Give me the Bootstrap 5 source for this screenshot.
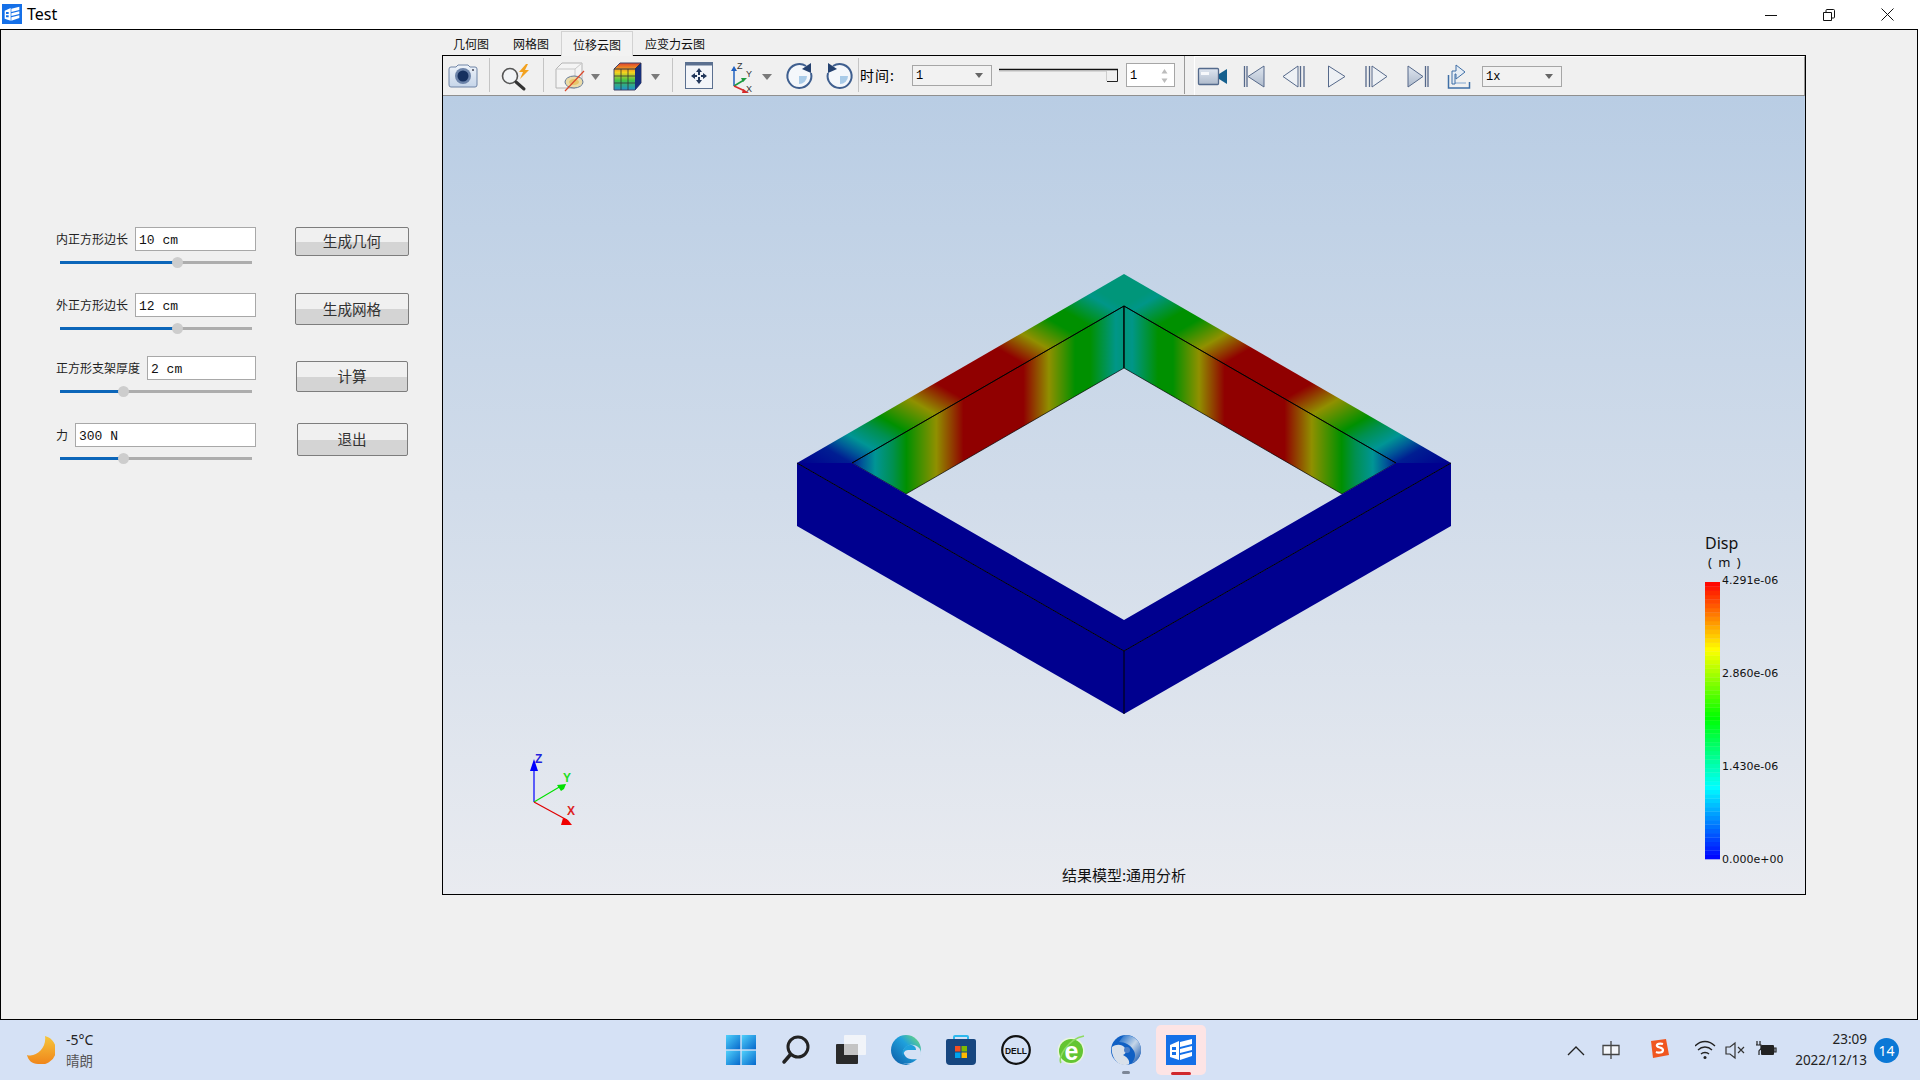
<!DOCTYPE html>
<html lang="zh">
<head>
<meta charset="utf-8">
<title>Test</title>
<link href="https://cdn.jsdelivr.net/npm/bootstrap@5.3.0/dist/css/bootstrap.min.css" rel="stylesheet">
<style>
html,body{margin:0;height:100%;overflow:hidden;background:#fff}
body{font-family:"Noto Sans","Noto Sans CJK SC",sans-serif;color:#000}
svg{display:block;flex-shrink:0}
.app-shell{width:1920px;height:1080px}
.title-bar{height:29px;background:#fff;flex-shrink:0}
.app-ico{margin:4px 5px 0 2px}
.title-text{font-size:16px;line-height:29px}
.win-btn{width:58px;height:29px;display:flex;align-items:center;justify-content:center}
.win-edge{margin-right:4px}
.main-frame{height:991px;width:1918px;border:1px solid #000;background:#f0f0f0;flex-shrink:0}
.side-panel{width:440px;flex-shrink:0;padding:197px 0 0 55px}
.ctrl-row{display:flex}
.row-h1{height:66px}.row-h2{height:63px}.row-h3{height:67px}
.ctrl-col{width:200px;margin-right:39px;flex-shrink:0}
.ctrl-line{display:flex;align-items:center;gap:7px}
.ctrl-label{font-size:12px;color:#222;white-space:nowrap;padding-top:2px}
.ctrl-input.form-control{height:24px;min-height:0;border:1px solid #a8a8a8;border-radius:0;padding:2px 3px 0;font:13px "Liberation Mono",monospace;color:#111;background:#fff;flex:1;min-width:0;box-shadow:none}
.slide-track{position:relative;height:3px;margin:10px 4px 0;background:#adadad}
.slide-fill{height:3px;background:#0c66b9}
.slide-knob{position:absolute;top:-4px;width:11px;height:11px;margin-left:-5px;border-radius:50%;background:#cdcdcd}
.btn-col{width:114px;display:flex;justify-content:center;align-items:flex-start}
.act-btn.btn{padding:0;border:1px solid #7d7d7d;border-radius:2px;font:14.6px "Noto Sans CJK SC",sans-serif;color:#333;background:linear-gradient(#f0f0f0 50%,#d4d4d4 50%);width:100%;line-height:1}
.act-btn.btn:hover{color:#333}
.act-btn.b1{height:29px}.act-btn.b2{height:32px}
.act-btn.btn.b3{height:31px;width:112px;margin-top:5px}
.act-btn.btn.b4{height:33px;width:111px}
.view-col{width:1365px;flex-shrink:0}
.tab-strip{display:flex;height:25px;margin-top:0}
.tab-item{font:12px "Noto Sans CJK SC",sans-serif;padding:5px 12px 0;line-height:18px;color:#111}
.tab-on{background:#f2f2f2;border:1px solid #d2d2d2;border-bottom:0;padding:4px 11px 0;margin-top:1px;position:relative;z-index:1;height:25px}
.view-frame{margin-left:1px;width:1364px;height:840px;border:1px solid #000}
.tool-bar{height:40px;display:flex;border-bottom:1px solid #8f8f8f;background:#f0f0f0}
.tool-sep{border-right:1px solid #c4c4c4;display:flex;align-items:center;height:34px;margin-top:2px}
.tool-e{width:326px;border-right:1px solid #9a9a9a;height:38px;margin:0}
.tool-first{margin-left:1px}
.time-lbl{font:14px "Noto Sans CJK SC",sans-serif;letter-spacing:1px;width:53px;padding-left:1px;flex-shrink:0}
.combo-box{height:21px;border:1px solid #a6a6a6;background:#f2f2f2;display:flex;align-items:center;justify-content:space-between;padding:1px 8px 0 3px;font:12px "Liberation Mono",monospace;flex-shrink:0}
.combo-a{width:80px}
.combo-b{width:80px}
.combo-arrow{width:0;height:0;border-left:4px solid transparent;border-right:4px solid transparent;border-top:5px solid #666}
.spin-box{width:49px;height:24px;border:1px solid #a6a6a6;background:#fff;display:flex;align-items:center;justify-content:space-between;padding:1px 6px 0 3px;font:12px "Liberation Mono",monospace;flex-shrink:0;margin-left:8px}
.slim-slide{margin-left:7px}
.play-panel{margin-left:9px;flex:1;border-top:1px solid #fff;border-left:1px solid #fff;border-right:1px solid #9a9a9a;display:flex;align-items:center;height:39px}
.scene-view{height:798px;background:linear-gradient(#b9cde4,#e9ebf0)}
.task-bar{height:60px;background:#d5e1f5;display:flex;align-items:center;flex-shrink:0;position:relative}
.wx-block{width:726px;display:flex;align-items:center;padding-left:27px;flex-shrink:0}
.wx-txt{margin-left:11px;font-size:14px;line-height:20px;color:#222}
.wx-sub{color:#555;font-family:"Noto Sans CJK SC",sans-serif;font-size:13.5px}
.dock{display:flex;gap:25px;align-items:center}
.dock-item{position:relative;width:30px;height:30px}
.dock-on{width:50px;height:50px;margin:0 -10px;padding:10px;background:#fde4e5;border-radius:5px}
.run-dot{position:absolute;left:11px;top:36px;width:8px;height:3px;border-radius:2px;background:#7c8696}
.run-red{position:absolute;left:15px;top:47px;width:20px;height:3px;border-radius:2px;background:#d0282c}
.tray{position:absolute;left:1567px;top:0;height:60px;display:flex;align-items:center}
.clock-txt{width:78px;text-align:right;font-size:13.5px;line-height:21px;color:#222;white-space:nowrap}
.note-badge{width:25px;height:25px;border-radius:50%;background:#0b78d6;color:#fff;font-size:14px;display:flex;align-items:center;justify-content:center;margin-left:7px}
</style>
</head>
<body>
<svg width="0" height="0" class="position-absolute">
 <defs>
  <symbol id="appicon" viewBox="0 0 30 30">
   <rect width="30" height="30" fill="#1570e8"/>
   <path d="M4 10L13 6V25L4 22Z" fill="#fff"/>
   <path d="M14 7L26 4V9L14 12Z M14 14L26 11V15L14 18Z M14 20L26 17V21L14 25Z" fill="#fff"/>
   <path d="M6 12h4v3H6zM6 17h4v3H6z" fill="#1570e8"/>
  </symbol>
 </defs>
</svg>
<div class="app-shell d-flex flex-column">
 <div class="title-bar d-flex">
  <svg class="app-ico" width="20" height="20"><use href="#appicon"/></svg>
  <span class="title-text">Test</span>
  <div class="ms-auto d-flex win-edge">
   <div class="win-btn"><svg width="12" height="12"><path d="M0 6.500H12" stroke="#111"/></svg></div>
   <div class="win-btn"><svg width="12" height="12"><path d="M.5 3.500h8v8h-8zM3 3V1.500a1 1 0 0 1 1-1h6.500a1 1 0 0 1 1 1V8a1 1 0 0 1-1 1H9" fill="none" stroke="#111"/></svg></div>
   <div class="win-btn"><svg width="13" height="13"><path d="M.5.5l12 12M12.500.5l-12 12" stroke="#111"/></svg></div>
  </div>
 </div>

 <div class="main-frame d-flex">
  <div class="side-panel">
   <div class="ctrl-row row-h1">
    <div class="ctrl-col">
     <div class="ctrl-line"><span class="ctrl-label">内正方形边长</span><input class="form-control ctrl-input" value="10 cm"></div>
     <div class="slide-track"><div class="slide-fill" style="width:61%"></div><div class="slide-knob" style="left:61%"></div></div>
    </div>
    <div class="btn-col"><button class="btn act-btn b1">生成几何</button></div>
   </div>
   <div class="ctrl-row row-h2">
    <div class="ctrl-col">
     <div class="ctrl-line"><span class="ctrl-label">外正方形边长</span><input class="form-control ctrl-input" value="12 cm"></div>
     <div class="slide-track"><div class="slide-fill" style="width:61%"></div><div class="slide-knob" style="left:61%"></div></div>
    </div>
    <div class="btn-col"><button class="btn act-btn b2">生成网格</button></div>
   </div>
   <div class="ctrl-row row-h3">
    <div class="ctrl-col">
     <div class="ctrl-line"><span class="ctrl-label">正方形支架厚度</span><input class="form-control ctrl-input" value="2 cm"></div>
     <div class="slide-track"><div class="slide-fill" style="width:33%"></div><div class="slide-knob" style="left:33%"></div></div>
    </div>
    <div class="btn-col"><button class="btn act-btn b3">计算</button></div>
   </div>
   <div class="ctrl-row">
    <div class="ctrl-col">
     <div class="ctrl-line"><span class="ctrl-label">力</span><input class="form-control ctrl-input" value="300 N"></div>
     <div class="slide-track"><div class="slide-fill" style="width:33%"></div><div class="slide-knob" style="left:33%"></div></div>
    </div>
    <div class="btn-col"><button class="btn act-btn b4">退出</button></div>
   </div>
  </div>

  <div class="view-col">
   <div class="tab-strip">
    <div class="tab-item">几何图</div>
    <div class="tab-item">网格图</div>
    <div class="tab-item tab-on">位移云图</div>
    <div class="tab-item">应变力云图</div>
   </div>
   <div class="view-frame">
    <div class="tool-bar">
     <div class="tool-sep tool-first">
      <svg width="45" height="38" viewBox="0 0 45 38"><defs><linearGradient id="cb" x1="0" y1="0" x2="0" y2="1"><stop offset="0" stop-color="#eef3fa"/><stop offset="1" stop-color="#c6d5e9"/></linearGradient></defs>
       <path d="M5 13a2 2 0 0 1 2-2h5l2-2h10l2 2h5a2 2 0 0 1 2 2v16a2 2 0 0 1-2 2H7a2 2 0 0 1-2-2z" fill="url(#cb)" stroke="#6f84a6"/>
       <circle cx="19" cy="20" r="8" fill="#6c83a9"/><circle cx="19" cy="20" r="5.500" fill="#16305f"/><circle cx="29" cy="14" r="1" fill="#445"/></svg>
     </div>
     <div class="tool-sep">
      <svg width="53" height="38" viewBox="0 0 53 38">
       <circle cx="20" cy="20" r="7.500" fill="#f2f4f6" stroke="#555" stroke-width="1.600"/><path d="M26 26l8 7" stroke="#333" stroke-width="3" stroke-linecap="round"/>
       <path d="M36 8l-7 8h4l-3 7 9-9h-4l3-6z" fill="#f2a11f"/></svg>
     </div>
     <div class="tool-sep">
      <svg width="128" height="38" viewBox="0 0 128 38"><defs><linearGradient id="heat" x1="0" y1="0" x2="0" y2="1"><stop offset="0" stop-color="#e0402c"/><stop offset=".35" stop-color="#f5d21e"/><stop offset=".65" stop-color="#3fc24a"/><stop offset="1" stop-color="#1f8fd0"/></linearGradient></defs>
       <path d="M12 13l6-6h20v18l-7 7H12z" fill="#f4f4f4" stroke="#b4b4b4"/><path d="M12 13h19v19M31 13l7-6" fill="none" stroke="#c8c8c8"/>
       <ellipse cx="30" cy="26" rx="9" ry="6" fill="#eadba8" stroke="#667a98"/><ellipse cx="30" cy="26" rx="5" ry="3" fill="#e8c56a"/><path d="M21 35L40 15" stroke="#d9472b" stroke-width="1.200"/>
       <path d="M47 18h9l-4.500 6z" fill="#7a7a7a"/>
       <path d="M70 13l6-6h21v20l-6 7H70z" fill="url(#heat)" stroke="#446"/><path d="M91 13l6-6v20l-6 7z" fill="#16307a"/><path d="M70 13h21l6-6" fill="none" stroke="#334"/>
       <path d="M77 13v21M84 13v21M70 20h21M70 27h21" stroke="#333" stroke-width=".8"/>
       <path d="M107 18h9l-4.500 6z" fill="#7a7a7a"/></svg>
     </div>
     <div class="tool-sep">
      <svg width="185" height="38" viewBox="0 0 185 38">
       <rect x="12.500" y="6.500" width="27" height="26" fill="#f3f5f9" stroke="#5b7090"/><path d="M12 8h28" stroke="#5b7090" stroke-width="3"/>
       <path d="M26 12l-3 4h2v3h2v-3h2zM26 28l-3-4h2v-3h2v3h2zM18 20l4-3v2h2v2h-2v2zM34 20l-4-3v2h-2v2h2v2z" fill="#23385c"/>
       <path d="M61 30V14" stroke="#2060c0" stroke-width="1.500"/><path d="M61 10l-3 5h6z" fill="#2060c0"/><path d="M61 30l10-6" stroke="#1c9a3e" stroke-width="1.500"/><path d="M74 22l-6 0 2 4z" fill="#1c9a3e"/><path d="M61 30l11 5" stroke="#d62a2a" stroke-width="1.500"/><path d="M76 37l-6-4-1 4z" fill="#d62a2a"/>
       <text x="64" y="13" font-family="Liberation Sans" font-size="9" fill="#333">Z</text><text x="73" y="21" font-family="Liberation Sans" font-size="9" fill="#333">Y</text><text x="73" y="36" font-family="Liberation Sans" font-size="9" fill="#333">X</text>
       <path d="M89 18h10l-5 6z" fill="#7a7a7a"/>
       <path d="M133 10a12 12 0 1 0 5 7" fill="#f4f7fb" stroke="#3f5f8f" stroke-width="2"/><path d="M126 20h8a8 8 0 0 1-8 8z" fill="#a9cbe8"/><path d="M138 7v10l-9-4z" fill="#24416f"/>
       <path d="M160 10a12 12 0 1 1-5 7" fill="#f4f7fb" stroke="#3f5f8f" stroke-width="2"/><path d="M167 20h8a8 8 0 0 1-8 8z" fill="#a9cbe8"/><path d="M155 7v10l9-4z" fill="#24416f"/></svg>
     </div>
     <div class="d-flex align-items-center tool-e">
      <span class="time-lbl">时间:</span>
      <div class="combo-box combo-a"><span>1</span><span class="combo-arrow"></span></div>
      <svg class="slim-slide" width="119" height="24" viewBox="0 0 119 24"><path d="M0 6.500H119" stroke="#111" stroke-width="1.500"/><path d="M0 8H107" stroke="#bbb"/><path d="M107.500 8V18" stroke="#ccc"/><path d="M108 18.500h10.500V7" fill="none" stroke="#222"/></svg>
      <div class="spin-box"><span>1</span><svg width="7" height="16" viewBox="0 0 7 16"><path d="M3.500 1L6.500 5.500H.5zM3.500 15L6.500 10.500H.5z" fill="#bcbcbc"/></svg></div>
     </div>
     <div class="play-panel">
      <svg width="48" height="38" viewBox="0 0 48 38"><defs><linearGradient id="mc" x1="0" y1="0" x2="0" y2="1"><stop offset="0" stop-color="#dfe6f0"/><stop offset="1" stop-color="#aebacb"/></linearGradient></defs><rect x="3.500" y="11.500" width="20" height="16" rx="1" fill="url(#mc)" stroke="#546a8c" stroke-width="1.300"/><rect x="6" y="15" width="8" height="3" fill="#f6f8fb"/><path d="M24 17l8-5v15l-8-5z" fill="#16608e"/></svg>
      <svg width="39" height="38" viewBox="0 0 39 38"><path d="M1.500 9v21M4 9v21" stroke="#56698a" stroke-width="1.300"/><path d="M21 9L5 19.500 21 30z" fill="url(#mc)" stroke="#56698a"/></svg>
      <svg width="45" height="38" viewBox="0 0 45 38"><path d="M16 9L1 19.500 16 30z" fill="#eef1f5" stroke="#56698a"/><path d="M18.500 9v21M22 9v21" stroke="#56698a" stroke-width="1.300"/></svg>
      <svg width="38" height="38" viewBox="0 0 38 38"><path d="M1.500 9L18 19.500 1.500 30z" fill="#eef1f5" stroke="#56698a"/></svg>
      <svg width="42" height="38" viewBox="0 0 42 38"><path d="M1 9v21M4.500 9v21" stroke="#56698a" stroke-width="1.300"/><path d="M7 9L22 19.500 7 30z" fill="#eef1f5" stroke="#56698a"/></svg>
      <svg width="40" height="38" viewBox="0 0 40 38"><path d="M1 9L16 19.500 1 30z" fill="url(#mc)" stroke="#56698a"/><path d="M18.500 9v21M21 9v21" stroke="#56698a" stroke-width="1.300"/></svg>
      <svg width="35" height="38" viewBox="0 0 35 38"><path d="M1.500 18v13h21V25" fill="none" stroke="#3f6fa6" stroke-width="1.500"/><path d="M5 26h14" stroke="#b9cbe0" stroke-width="2"/><path d="M5 27V14h4V8l9 7-9 7v-5H8v10z" fill="#e6edf5" stroke="#3f6fa6"/></svg>
      <div class="combo-box combo-b"><span>1x</span><span class="combo-arrow"></span></div>
     </div>
    </div>
    <div class="scene-view">
     <svg width="1362" height="798" viewBox="443 96 1362 798">
      <defs>
       <linearGradient id="wallL" gradientUnits="userSpaceOnUse" x1="852" y1="0" x2="1124" y2="0">
        <stop offset="0" stop-color="#001e92"/><stop offset=".04" stop-color="#005a98"/><stop offset=".085" stop-color="#009595"/><stop offset=".15" stop-color="#009050"/><stop offset=".2" stop-color="#009000"/><stop offset=".31" stop-color="#909000"/><stop offset=".41" stop-color="#900000"/><stop offset=".63" stop-color="#900000"/><stop offset=".724" stop-color="#909000"/><stop offset=".82" stop-color="#009000"/><stop offset=".875" stop-color="#009000"/><stop offset=".97" stop-color="#009688"/><stop offset="1" stop-color="#00967a"/>
       </linearGradient>
       <linearGradient id="wallR" href="#wallL" gradientUnits="userSpaceOnUse" x1="1396" y1="0" x2="1124" y2="0"/>
       <linearGradient id="stripL" gradientUnits="userSpaceOnUse" x1="797" y1="463" x2="961" y2="180">
        <stop offset="0" stop-color="#00008f"/><stop offset=".083" stop-color="#001e92"/><stop offset=".117" stop-color="#005a98"/><stop offset=".154" stop-color="#009595"/><stop offset=".208" stop-color="#009050"/><stop offset=".25" stop-color="#009000"/><stop offset=".342" stop-color="#909000"/><stop offset=".425" stop-color="#900000"/><stop offset=".61" stop-color="#900000"/><stop offset=".687" stop-color="#909000"/><stop offset=".767" stop-color="#009000"/><stop offset=".8125" stop-color="#009000"/><stop offset=".892" stop-color="#009688"/><stop offset=".917" stop-color="#00967a"/><stop offset="1" stop-color="#00967a"/>
       </linearGradient>
       <linearGradient id="stripR" href="#stripL" gradientUnits="userSpaceOnUse" x1="1451" y1="463" x2="1287" y2="180"/>
      </defs>
      <g stroke="#000" stroke-width=".7" stroke-linejoin="round">
       <polygon points="1124,274 797,463 852,463 1124,306" fill="url(#stripL)" stroke="none"/>
       <polygon points="1124,274 1451,463 1396,463 1124,306" fill="url(#stripR)" stroke="none"/>
       <polygon points="852,463 1124,306 1124,368 906,494" fill="url(#wallL)"/>
       <polygon points="1396,463 1124,306 1124,368 1342,494" fill="url(#wallR)"/>
       <polygon points="797,463 1124,651 1451,463 1396,463 1124,620 852,463" fill="#00008f" stroke="none"/>
       <polygon points="797,463 797,526 1124,714 1124,651" fill="#00008f" stroke="none"/>
       <polygon points="1451,463 1451,526 1124,714 1124,651" fill="#00008f" stroke="none"/>
      </g>
      <path d="M852 463L1124 306L1396 463M1124 306V368M797 463L1124 651L1451 463M1124 651V714" fill="none" stroke="#000" stroke-width="1"/>

      <path d="M534 802V767" stroke="#0000ff" stroke-width="1.200"/><path d="M534 759l-4 12 4 0 4 0z" fill="#0000ff"/>
      <path d="M534 802l27-16" stroke="#00e000" stroke-width="1.200"/><path d="M566 784l-9 1 4 6 3-2z" fill="#00e000"/>
      <path d="M534 802l33 18" stroke="#e00000" stroke-width="1.200"/><path d="M572 825l-11 0 2-7 5 2z" fill="#f00000"/>
      <text x="535" y="763" font-family="Liberation Sans" font-weight="700" font-size="12" fill="#2222dd">Z</text>
      <text x="563" y="782" font-family="Liberation Sans" font-weight="700" font-size="12" fill="#22dd22">Y</text>
      <text x="567" y="815" font-family="Liberation Sans" font-weight="700" font-size="12" fill="#dd2222">X</text>

      <g id="legendBands"></g>
      <text x="1705" y="549" font-family="Noto Sans" font-size="16" fill="#111">Disp</text>
      <text x="1708" y="567" font-family="Noto Sans" font-size="13" fill="#111" word-spacing="3">( m )</text>
      <g font-family="DejaVu Sans" font-size="11" fill="#111">
       <text x="1722" y="584">4.291e-06</text>
       <text x="1722" y="677">2.860e-06</text>
       <text x="1722" y="770">1.430e-06</text>
       <text x="1722" y="863">0.000e+00</text>
      </g>
      <text x="1124" y="881" text-anchor="middle" font-family="Noto Sans CJK SC" font-size="15" fill="#111">结果模型:通用分析</text>
     </svg>
    </div>
   </div>
  </div>
 </div>

 <div class="task-bar">
  <div class="wx-block">
   <svg width="28" height="28" viewBox="0 0 28 28"><defs><linearGradient id="moon" x1="0" y1="0" x2="0" y2="1"><stop offset="0" stop-color="#f6c63c"/><stop offset="1" stop-color="#f0851a"/></linearGradient></defs><path d="M18 0a14 14 0 0 1-7 28C5 28 1 24 0 19c9 3 20-7 18-19z" fill="url(#moon)"/></svg>
   <div class="wx-txt"><div>-5°C</div><div class="wx-sub">晴朗</div></div>
  </div>
  <div class="dock">
   <div class="dock-item"><svg width="30" height="30" viewBox="0 0 30 30"><defs><linearGradient id="win" x1="0" y1="0" x2="1" y2="1"><stop offset="0" stop-color="#4fd0fb"/><stop offset="1" stop-color="#0668cc"/></linearGradient></defs><rect width="14.300" height="14.300" fill="url(#win)"/><rect x="15.700" width="14.300" height="14.300" fill="url(#win)"/><rect y="15.700" width="14.300" height="14.300" fill="url(#win)"/><rect x="15.700" y="15.700" width="14.300" height="14.300" fill="url(#win)"/></svg></div>
   <div class="dock-item"><svg width="30" height="30" viewBox="0 0 30 30"><circle cx="17" cy="12" r="10" fill="none" stroke="#222" stroke-width="3"/><path d="M9.500 19.500L3 27" stroke="#222" stroke-width="3.500" stroke-linecap="round"/></svg></div>
   <div class="dock-item"><svg width="30" height="30" viewBox="0 0 30 30"><rect x="8" y="0" width="22" height="20" rx="1" fill="#f4f6fa" fill-opacity=".9"/><rect y="9" width="22" height="20" rx="1" fill="#2a2a2a"/><rect x="8" y="9" width="14" height="11" fill="#c4c4c4"/></svg></div>
   <div class="dock-item"><svg width="30" height="30" viewBox="0 0 30 30"><defs><linearGradient id="ed1" x1="0" y1="1" x2="1" y2="0"><stop offset="0" stop-color="#0c59a4"/><stop offset=".6" stop-color="#1fa0dc"/><stop offset="1" stop-color="#7be36a"/></linearGradient></defs><circle cx="15" cy="15" r="15" fill="url(#ed1)"/><path d="M30 18c0-5-5-9-11-8-5 1-8 5-6 9 2 5 8 6 13 5-3 3-8 6-14 4 7 3 14 1 16-3 1-2 2-4 2-7z" fill="#d5e1f5"/><path d="M12 21c-2-5 2-11 7-11 4 0 6 2 6 5h-8c-3 0-5 3-5 6z" fill="#1fa0dc"/></svg></div>
   <div class="dock-item"><svg width="30" height="30" viewBox="0 0 30 30"><path d="M8 5V2a1 1 0 0 1 1-1h12a1 1 0 0 1 1 1v3" fill="none" stroke="#2db8ee" stroke-width="2"/><path d="M0 6a2 2 0 0 1 2-2h26a2 2 0 0 1 2 2v20a4 4 0 0 1-4 4H4a4 4 0 0 1-4-4z" fill="#17467f"/><rect x="9" y="11" width="5.500" height="5.500" fill="#f25022"/><rect x="15.500" y="11" width="5.500" height="5.500" fill="#7fba00"/><rect x="9" y="17.500" width="5.500" height="5.500" fill="#00a4ef"/><rect x="15.500" y="17.500" width="5.500" height="5.500" fill="#ffb900"/></svg></div>
   <div class="dock-item"><svg width="30" height="30" viewBox="0 0 30 30"><circle cx="15" cy="15" r="13.800" fill="none" stroke="#111" stroke-width="2.200"/><text x="15" y="18.500" text-anchor="middle" font-family="Liberation Sans" font-weight="700" font-size="9" fill="#111" textLength="22" lengthAdjust="spacingAndGlyphs">DELL</text></svg></div>
   <div class="dock-item"><svg width="30" height="30" viewBox="0 0 30 30"><circle cx="15" cy="16" r="13.500" fill="#e9f5df"/><circle cx="15" cy="16" r="12" fill="#63c532"/><path d="M5 28C1 23 12 4 28 1" fill="none" stroke="#8edb62" stroke-width="1.500"/><text x="15.500" y="25" text-anchor="middle" font-family="Liberation Sans" font-weight="700" font-size="25" fill="#fff">e</text></svg></div>
   <div class="dock-item"><svg width="30" height="30" viewBox="0 0 30 30"><defs><linearGradient id="sph" x1="0" y1="0" x2="1" y2="1"><stop offset="0" stop-color="#0a62c8"/><stop offset=".5" stop-color="#c6d6e8"/><stop offset="1" stop-color="#0c4fa8"/></linearGradient></defs><circle cx="15" cy="15" r="15" fill="#1060c4"/><path d="M14 0c8 0 16 6 16 15 0 5-3 11-9 13 3-4 4-8 2-12-3-6-9-9-15-9 2-3 3-5 6-7z" fill="url(#sph)"/><path d="M1 12c4-3 10-3 13 1 2 3 1 6-2 7 4 2 7 5 6 9-3 2-9 1-12-2-4-4-6-10-5-15z" fill="#d8e0ea"/><circle cx="16" cy="15" r="3" fill="#4a7fc8"/></svg><div class="run-dot"></div></div>
   <div class="dock-item dock-on"><svg width="30" height="30"><use href="#appicon"/></svg><div class="run-red"></div></div>
  </div>
  <div class="tray">
   <svg width="35" height="60" viewBox="0 0 35 60"><path d="M1 35l8-8 8 8" fill="none" stroke="#222" stroke-width="1.300"/></svg>
   <svg width="46" height="60" viewBox="0 0 46 60"><path d="M1 25.500h16v9H1zM9 21v18" fill="#f4f6fa" stroke="#444" stroke-width="1.300"/></svg>
   <svg width="47" height="60" viewBox="0 0 47 60"><path d="M3 21L18 19l3 16-16 3z" fill="#f0561f"/><path d="M15 24c-3-1-7 0-6 2s6 1 6 4-5 3-7 2" fill="none" stroke="#fff" stroke-width="2.200"/></svg>
   <svg width="30" height="60" viewBox="0 0 30 60"><path d="M0 26c6-6 14-6 20 0M3 30c4-4 10-4 14 0M6 34c2-2 6-2 8 0" fill="none" stroke="#222" stroke-width="1.300"/><circle cx="10" cy="37.500" r="1.500" fill="#222"/></svg>
   <svg width="30" height="60" viewBox="0 0 30 60"><path d="M1 27h4l5-4v15l-5-4H1z" fill="none" stroke="#333" stroke-width="1.200"/><path d="M13 27l6 6M19 27l-6 6" stroke="#333" stroke-width="1.200"/></svg>
   <svg width="34" height="60" viewBox="0 0 34 60"><rect x="6" y="25" width="13" height="10" rx="1" fill="#222"/><path d="M19 28h2v4h-2zM2 21v4M5 21v4M1 25h5v3c0 2-2 2-2 3v4" fill="none" stroke="#222" stroke-width="1.200"/></svg>
   <div class="clock-txt"><div>23:09</div><div>2022/12/13</div></div>
   <div class="note-badge">14</div>
  </div>
 </div>
</div>
<script>
(function(){
 var g=document.getElementById('legendBands'),n=64,h=277/n;
 var st=[[0,[0,0,255]],[.26,[0,255,255]],[.51,[0,255,0]],[.755,[255,255,0]],[1,[255,0,0]]];
 for(var i=0;i<n;i++){
  var t=(i+.5)/n,j=0;while(j<3&&t>st[j+1][0])j++;
  var a=st[j],b=st[j+1],f=(t-a[0])/(b[0]-a[0]);
  var c=a[1].map(function(v,k){return Math.round(v+(b[1][k]-v)*f)});
  var r=document.createElementNS('http://www.w3.org/2000/svg','rect');
  r.setAttribute('x',1705);r.setAttribute('width',15);
  r.setAttribute('y',(859-(i+1)*h).toFixed(2));r.setAttribute('height',(h+.3).toFixed(2));
  r.setAttribute('fill','rgb('+c.join(',')+')');g.appendChild(r);
 }
})();
</script>
<script src="https://cdn.jsdelivr.net/npm/bootstrap@5.3.0/dist/js/bootstrap.bundle.min.js"></script>
</body>
</html>
